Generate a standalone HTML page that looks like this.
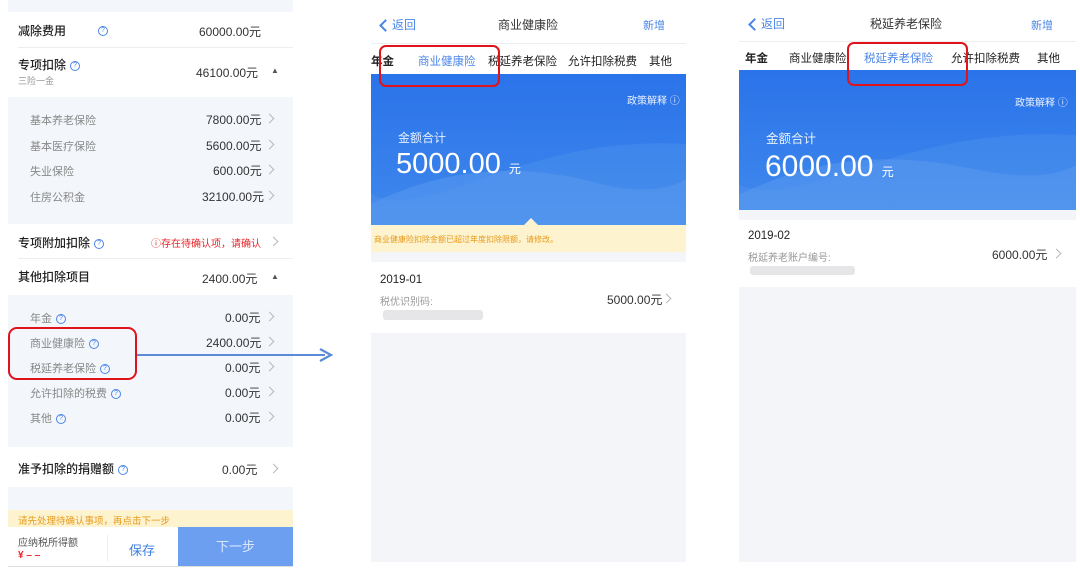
<!DOCTYPE html><html><head><meta charset="utf-8"><style>
*{margin:0;padding:0;box-sizing:border-box}
body{width:1080px;height:574px;background:#fff;position:relative;overflow:hidden;font-family:"Liberation Sans","Noto Sans CJK SC",sans-serif;color:#222}
.a{position:absolute;white-space:nowrap}
.q{display:inline-block;width:10px;height:10px;border:1px solid #4a86e8;border-radius:50%;font-size:7px;line-height:8px;text-align:center;color:#4a86e8;vertical-align:middle;margin-left:4px}
.gt{color:#888;font-size:11px}
.v{font-size:12px;color:#333}
.ch{position:absolute;width:7px;height:7px;border-top:1px solid #b8b8b8;border-right:1px solid #b8b8b8;transform:rotate(45deg)}
.ln{position:absolute;height:1px;background:#eee}
.bk{display:inline-block;width:9px;height:9px;border-left:2px solid #4a86e8;border-bottom:2px solid #4a86e8;transform:rotate(45deg);margin-right:2px;vertical-align:-1px}
.t{font-size:12px;font-weight:500}
</style></head><body>
<!-- LEFT -->
<div class="a" style="left:8px;top:0;width:285px;height:12px;background:#f3f6fb"></div>
<div class="a t" style="left:18px;top:22px">减除费用</div><div class="a" style="left:94px;top:22px"><span class="q">?</span></div>
<div class="a v" style="left:199px;top:23px">60000.00元</div>
<div class="ln" style="left:18px;top:47px;width:275px"></div>
<div class="a t" style="left:18px;top:56px">专项扣除<span class="q">?</span></div>
<div class="a" style="left:18px;top:74px;font-size:9px;color:#999">三险一金</div>
<div class="a v" style="left:196px;top:64px">46100.00元</div><div class="a" style="left:271px;top:66px;font-size:8px;color:#555">▲</div>
<div class="a" style="left:8px;top:97px;width:285px;height:127px;background:#f3f6fb"></div>
<div class="a gt" style="left:30px;top:112px">基本养老保险</div><div class="a v" style="left:206px;top:111px">7800.00元</div><div class="ch" style="left:266px;top:115px"></div>
<div class="a gt" style="left:30px;top:138px">基本医疗保险</div><div class="a v" style="left:206px;top:137px">5600.00元</div><div class="ch" style="left:266px;top:141px"></div>
<div class="a gt" style="left:30px;top:163px">失业保险</div><div class="a v" style="left:213px;top:162px">600.00元</div><div class="ch" style="left:266px;top:166px"></div>
<div class="a gt" style="left:30px;top:189px">住房公积金</div><div class="a v" style="left:202px;top:188px">32100.00元</div><div class="ch" style="left:266px;top:192px"></div>
<div class="a t" style="left:18px;top:234px">专项附加扣除<span class="q">?</span></div>
<div class="a" style="left:151px;top:235px;font-size:10px;color:#e8262b">ⓘ存在待确认项，请确认</div><div class="ch" style="left:270px;top:238px"></div>
<div class="ln" style="left:18px;top:258px;width:275px"></div>
<div class="a t" style="left:18px;top:268px">其他扣除项目</div>
<div class="a v" style="left:202px;top:270px">2400.00元</div><div class="a" style="left:271px;top:272px;font-size:8px;color:#555">▲</div>
<div class="a" style="left:8px;top:295px;width:285px;height:152px;background:#f3f6fb"></div>
<div class="a gt" style="left:30px;top:310px">年金<span class="q">?</span></div><div class="a v" style="left:225px;top:309px">0.00元</div><div class="ch" style="left:266px;top:313px"></div>
<div class="a gt" style="left:30px;top:335px">商业健康险<span class="q">?</span></div><div class="a v" style="left:206px;top:334px">2400.00元</div><div class="ch" style="left:266px;top:338px"></div>
<div class="a gt" style="left:30px;top:360px">税延养老保险<span class="q">?</span></div><div class="a v" style="left:225px;top:359px">0.00元</div><div class="ch" style="left:266px;top:363px"></div>
<div class="a gt" style="left:30px;top:385px">允许扣除的税费<span class="q">?</span></div><div class="a v" style="left:225px;top:384px">0.00元</div><div class="ch" style="left:266px;top:388px"></div>
<div class="a gt" style="left:30px;top:410px">其他<span class="q">?</span></div><div class="a v" style="left:225px;top:409px">0.00元</div><div class="ch" style="left:266px;top:413px"></div>
<div class="a t" style="left:18px;top:460px">准予扣除的捐赠额<span class="q">?</span></div>
<div class="a v" style="left:222px;top:461px">0.00元</div><div class="ch" style="left:270px;top:465px"></div>
<div class="a" style="left:8px;top:487px;width:285px;height:23px;background:#f3f6fb"></div>
<div class="a" style="left:8px;top:510px;width:285px;height:17px;background:#fdf3cf;font-size:9.5px;color:#e89a1a;padding:3px 0 0 10px">请先处理待确认事项，再点击下一步</div>
<div class="a" style="left:18px;top:534px;font-size:10px;color:#555">应纳税所得额</div>
<div class="a" style="left:18px;top:550px;font-size:10px;color:#e8262b;font-weight:bold">¥ – –</div>
<div class="a" style="left:107px;top:535px;width:1px;height:26px;background:#eee"></div>
<div class="a" style="left:129px;top:540px;font-size:13px;color:#3f7fe0">保存</div>
<div class="a" style="left:178px;top:527px;width:115px;height:40px;background:#6c9ff0;color:#dbe7fc;font-size:13px;text-align:center;line-height:40px">下一步</div>
<div class="a" style="left:8px;top:566px;width:285px;height:1px;background:#ddd"></div>
<div class="a" style="left:8px;top:327px;width:129px;height:53px;border:2.5px solid #e0131b;border-radius:9px"></div>
<div class="a" style="left:137px;top:354px;width:188px;height:2px;background:#5b8ad6"></div>
<svg class="a" style="left:318px;top:347px" width="16" height="16"><path d="M2 2 L13 8 L2 14" fill="none" stroke="#5b8ad6" stroke-width="2.2"/></svg>

<!-- MIDDLE -->
<div class="a" style="left:371px;top:8px;width:315px;height:554px;background:#f4f5f9"></div>
<div class="a" style="left:371px;top:8px;width:315px;height:66px;background:#fff"></div>
<div class="a" style="left:381px;top:16px;font-size:12px;color:#4a86e8"><span class="bk"></span>返回</div>
<div class="a" style="left:498px;top:16px;font-size:12px;color:#333">商业健康险</div>
<div class="a" style="left:643px;top:17px;font-size:11px;color:#4a86e8">新增</div>
<div class="ln" style="left:371px;top:43px;width:315px"></div>
<div class="a" style="left:371px;top:53px;font-size:11.5px;font-weight:bold">年金</div>
<div class="a" style="left:418px;top:53px;font-size:11.5px;color:#4a86e8">商业健康险</div>
<div class="a" style="left:488px;top:53px;font-size:11.5px">税延养老保险</div>
<div class="a" style="left:568px;top:53px;font-size:11.5px">允许扣除税费</div>
<div class="a" style="left:649px;top:53px;font-size:11.5px">其他</div>
<div class="a" style="left:371px;top:74px;width:315px;height:151px;background:linear-gradient(180deg,#2a73ea,#3f88ec);overflow:hidden">
<svg width="315" height="151" style="position:absolute;left:0;top:0"><path d="M0 130 C80 90 160 90 230 110 C270 120 300 115 315 105 L315 151 L0 151Z" fill="#5b9bf0" opacity=".5"/><path d="M0 120 C60 150 150 60 315 70 L315 151 L0 151Z" fill="#5b9bf0" opacity=".3"/></svg>
<div class="a" style="left:256px;top:18px;font-size:10px;color:#e8f0fd">政策解释 ⓘ</div>
<div class="a" style="left:27px;top:55px;font-size:12px;color:#e8f0fd">金额合计</div>
<div class="a" style="left:25px;top:74px;font-size:29px;color:#fff">5000.00 <span style="font-size:12px">元</span></div>
</div>
<div class="a" style="left:524px;top:218px;width:0;height:0;border-left:7px solid transparent;border-right:7px solid transparent;border-bottom:7px solid #fdf3cf"></div>
<div class="a" style="left:371px;top:225px;width:315px;height:27px;background:#fdf3cf;font-size:8px;color:#e89a1a;padding:9px 0 0 3px">商业健康险扣除金额已超过年度扣除限额，请修改。</div>
<div class="a" style="left:371px;top:262px;width:315px;height:71px;background:#fff"></div>
<div class="a" style="left:380px;top:274px;font-size:11.5px">2019-01</div>
<div class="a" style="left:380px;top:293px;font-size:10px;color:#999">税优识别码:</div>
<div class="a" style="left:383px;top:310px;width:100px;height:10px;background:#e6e6e8;border-radius:3px"></div>
<div class="a v" style="left:607px;top:291px">5000.00元</div><div class="ch" style="left:663px;top:295px"></div>
<div class="a" style="left:379px;top:45px;width:121px;height:42px;border:2.5px solid #e0131b;border-radius:7px"></div>

<!-- RIGHT -->
<div class="a" style="left:739px;top:8px;width:337px;height:554px;background:#f4f5f9"></div>
<div class="a" style="left:739px;top:8px;width:337px;height:62px;background:#fff"></div>
<div class="a" style="left:750px;top:15px;font-size:12px;color:#4a86e8"><span class="bk"></span>返回</div>
<div class="a" style="left:870px;top:15px;font-size:12px;color:#333">税延养老保险</div>
<div class="a" style="left:1031px;top:17px;font-size:11px;color:#4a86e8">新增</div>
<div class="ln" style="left:739px;top:41px;width:337px"></div>
<div class="a" style="left:745px;top:50px;font-size:11.5px;font-weight:bold">年金</div>
<div class="a" style="left:789px;top:50px;font-size:11.5px">商业健康险</div>
<div class="a" style="left:864px;top:50px;font-size:11.5px;color:#4a86e8">税延养老保险</div>
<div class="a" style="left:951px;top:50px;font-size:11.5px">允许扣除税费</div>
<div class="a" style="left:1037px;top:50px;font-size:11.5px">其他</div>
<div class="a" style="left:739px;top:70px;width:337px;height:140px;background:linear-gradient(180deg,#2a73ea,#3f88ec);overflow:hidden">
<svg width="337" height="140" style="position:absolute;left:0;top:0"><path d="M0 125 C90 80 170 85 240 100 C290 110 320 105 337 95 L337 140 L0 140Z" fill="#5b9bf0" opacity=".5"/><path d="M0 115 C70 140 160 55 337 65 L337 140 L0 140Z" fill="#5b9bf0" opacity=".3"/></svg>
<div class="a" style="left:276px;top:24px;font-size:10px;color:#e8f0fd">政策解释 ⓘ</div>
<div class="a" style="left:27px;top:58px;font-size:12.5px;color:#e8f0fd">金额合计</div>
<div class="a" style="left:26px;top:80px;font-size:30px;color:#fff">6000.00 <span style="font-size:12px">元</span></div>
</div>
<div class="a" style="left:739px;top:220px;width:337px;height:67px;background:#fff"></div>
<div class="a" style="left:748px;top:230px;font-size:11.5px">2019-02</div>
<div class="a" style="left:748px;top:249px;font-size:10px;color:#999">税延养老账户编号:</div>
<div class="a" style="left:750px;top:266px;width:105px;height:9px;background:#e6e6e8;border-radius:3px"></div>
<div class="a v" style="left:992px;top:246px">6000.00元</div><div class="ch" style="left:1053px;top:250px"></div>
<div class="a" style="left:847px;top:42px;width:121px;height:44px;border:2.5px solid #e0131b;border-radius:7px"></div>
</body></html>
